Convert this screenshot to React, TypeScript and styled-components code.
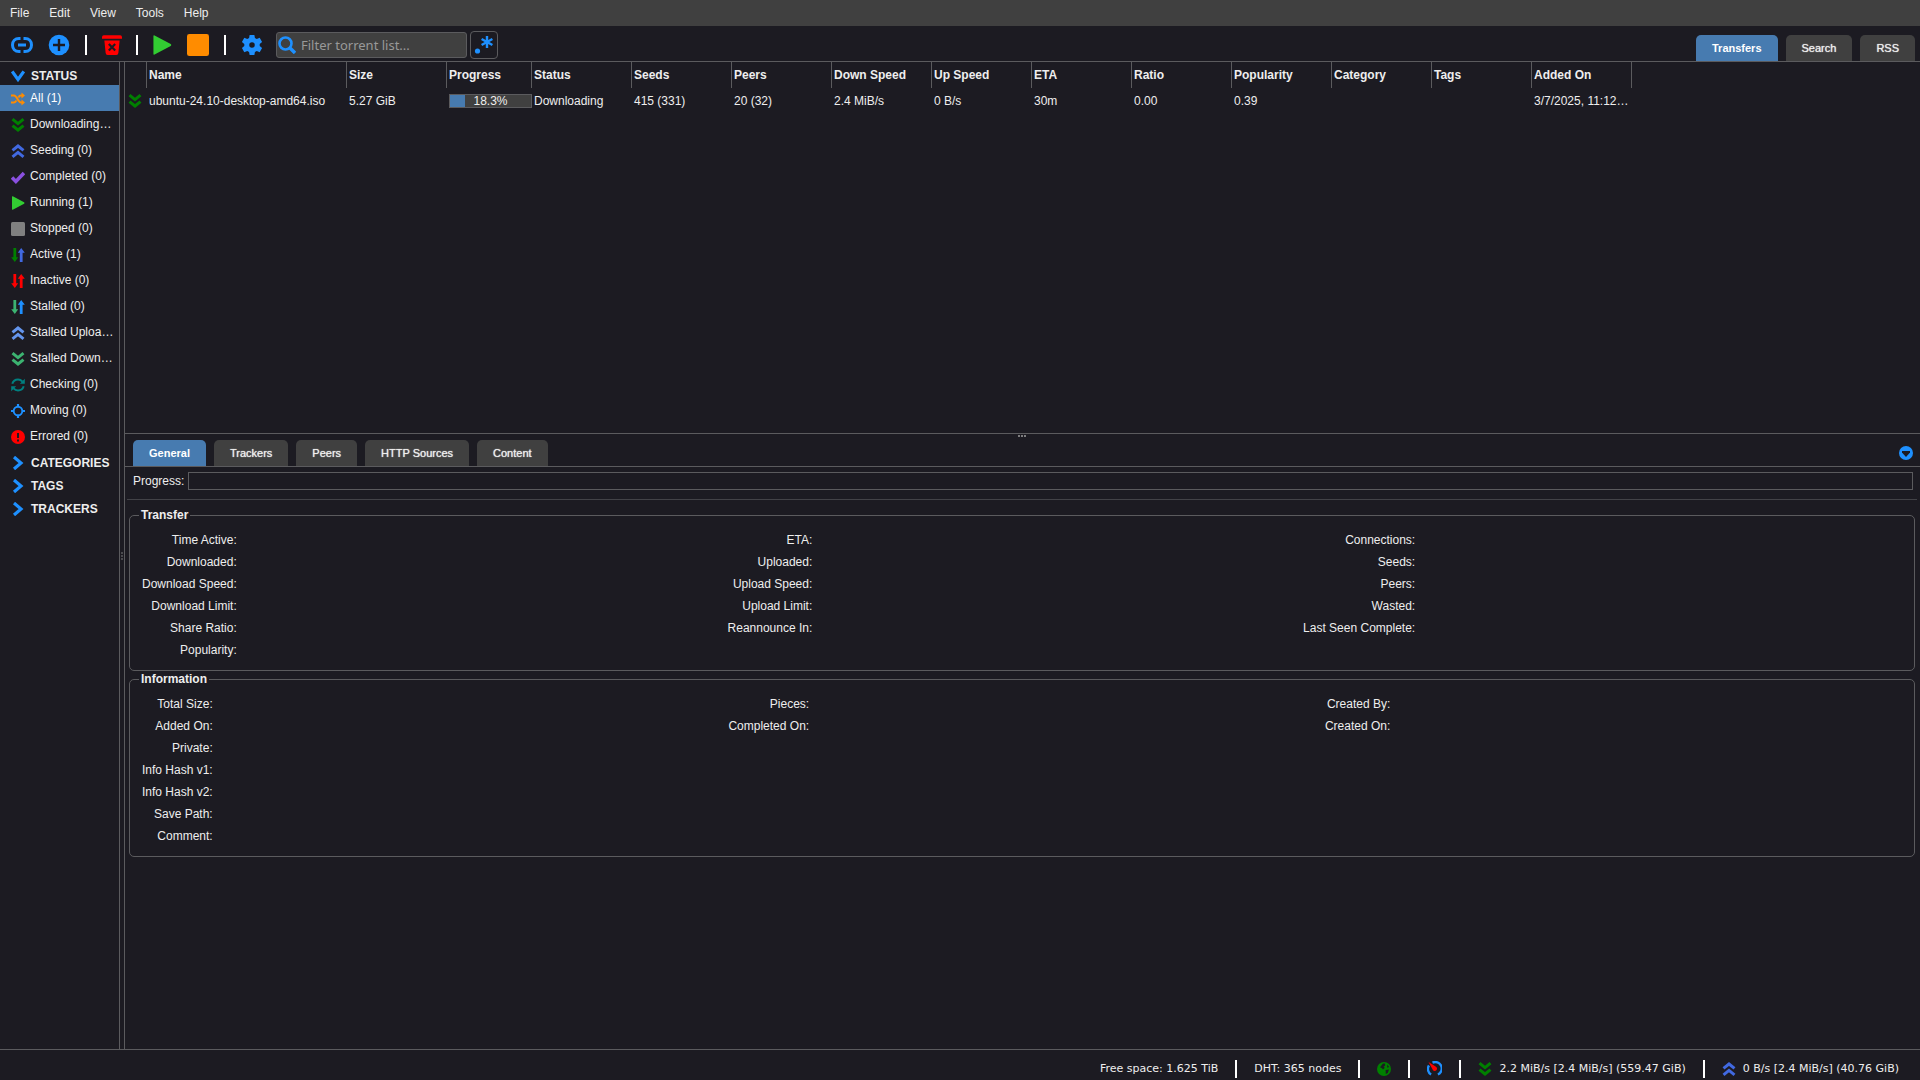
import React, { useState } from "react";
import styled, { createGlobalStyle } from "styled-components";

const c = {
  bg: "#1c1b22",
  raised: "#404040",
  line: "#5b5b5e",
  text: "#eeeeee",
  accent: "#477bb0",
  blue: "#1e90ff",
  green: "#008000",
  royal: "#4169e1",
};

const Global = createGlobalStyle`
  *, *::before, *::after { box-sizing: border-box; }
  body {
    margin: 0;
    background: ${c.bg};
    color: ${c.text};
    font: 12px/16px "Liberation Sans", Arial, sans-serif;
  }
  button, input { font: inherit; color: inherit; }
  button { background: none; border: 0; padding: 0; cursor: pointer; }
  a { color: inherit; text-decoration: none; }
  ul { list-style: none; margin: 0; padding: 0; }
  svg { display: block; flex: none; }
`;

const Page = styled.div`
  display: flex;
  flex-direction: column;
  height: 100vh;
  overflow: hidden;
`;

const MenuBar = styled.nav`
  display: flex;
  height: 26px;
  background: ${c.raised};
`;

const MenuButton = styled.button`
  padding: 0 10px;
`;

const Toolbar = styled.header`
  display: flex;
  align-items: flex-end;
  justify-content: space-between;
  height: 36px;
  padding: 0 5px 0 11px;
  border-bottom: 1px solid ${c.line};
`;

const Tools = styled.div`
  display: flex;
  align-items: center;
  align-self: stretch;
  padding-top: 2px;
`;

const ToolGroup = styled.div`
  display: flex;
  align-items: center;
  gap: 15px;
`;

const Divider = styled.span<{ $gap: number }>`
  width: 2px;
  height: 20px;
  margin: 0 ${(p) => p.$gap}px;
  background: #fff;
`;

const SearchBox = styled.label`
  display: flex;
  align-items: center;
  width: 191px;
  height: 26px;
  margin-left: 13px;
  padding-left: 1px;
  border: 1px solid ${c.line};
  border-radius: 3px;
  background: ${c.raised};
`;

const SearchInput = styled.input`
  flex: 1;
  min-width: 0;
  height: 24px;
  padding: 0 5px;
  border: 0;
  outline: 0;
  background: none;
  font: 13px "Noto Sans", sans-serif;
  &::placeholder { color: #999; opacity: 1; }
`;

const RegexButton = styled.button`
  display: grid;
  place-items: center;
  width: 28px;
  height: 28px;
  margin-left: 3px;
  border: 1px solid ${c.line};
  border-radius: 4px;
`;

const TabList = styled.div`
  display: flex;
  gap: 8px;
`;

const Tab = styled.button<{ $active?: boolean }>`
  height: 26px;
  padding: 0 16px;
  border-radius: 5px 5px 0 0;
  background: ${(p) => (p.$active ? c.accent : c.raised)};
  color: ${(p) => (p.$active ? "#fff" : c.text)};
  font-size: 11px;
  font-weight: ${(p) => (p.$active ? "bold" : "normal")};
  text-shadow: ${(p) => (p.$active ? "none" : "0 0 1px currentColor")};
`;

const Body = styled.div`
  display: flex;
  flex: 1;
  min-height: 0;
`;

const Sidebar = styled.aside`
  width: 120px;
  border-right: 1px solid ${c.line};
`;

const SectionToggle = styled.button`
  display: flex;
  align-items: center;
  gap: 6px;
  width: 100%;
  height: 23px;
  padding: 4px 11px 0;
  font-weight: bold;
`;

const FilterLink = styled.a<{ $selected?: boolean }>`
  display: flex;
  align-items: center;
  gap: 5px;
  height: 26px;
  padding: 0 5px 0 11px;
  background: ${(p) => (p.$selected ? c.accent : "none")};
  color: ${(p) => (p.$selected ? "#fff" : c.text)};
  svg { margin-top: 2px; }
`;

const FilterName = styled.span`
  overflow: hidden;
  text-overflow: ellipsis;
  white-space: nowrap;
`;

const SideHandle = styled.div`
  display: grid;
  place-items: center;
  width: 4px;
`;

const Content = styled.main`
  display: flex;
  flex: 1;
  flex-direction: column;
  min-width: 0;
  border-left: 1px solid ${c.line};
`;

const Transfers = styled.section`
  flex: 371 1 0;
  min-height: 0;
  overflow: hidden;
`;

const Torrents = styled.table`
  border-collapse: separate;
  border-spacing: 0;
  table-layout: fixed;
  width: 1507px;
  th, td {
    height: 26px;
    overflow: hidden;
    text-align: left;
    text-overflow: ellipsis;
    white-space: nowrap;
  }
  th { padding: 0 0 0 2px; border-right: 1px solid ${c.line}; }
  td { padding: 0 0 0 2px; }
  td:first-child { padding-left: 3px; }
  td:last-child { padding-right: 3px; }
`;

const Meter = styled.div`
  position: relative;
  height: 14px;
  border: 1px solid ${c.line};
  background: ${c.raised};
  line-height: 12px;
  text-align: center;
`;

const MeterFill = styled.div`
  height: 12px;
  background: ${c.accent};
`;

const MeterText = styled.span`
  position: absolute;
  inset: 0;
`;

const RowHandle = styled.div`
  display: flex;
  justify-content: center;
  height: 7px;
  padding: 1px 2px 0 0;
  border-top: 1px solid ${c.line};
`;

const Details = styled.section`
  flex: 609 1 0;
  min-height: 0;
`;

const DetailTabs = styled.div`
  display: flex;
  align-items: center;
  justify-content: space-between;
  padding: 0 7px 0 8px;
  border-bottom: 1px solid ${c.line};
`;

const ProgressRow = styled.div`
  display: flex;
  align-items: center;
  gap: 4px;
  padding: 5px 7px 9px 8px;
`;

const PiecesBar = styled.div`
  flex: 1;
  height: 18px;
  border: 1px solid ${c.line};
`;

const Rule = styled.hr`
  height: 1px;
  margin: 0 3px 7px 2px;
  border: 0;
  background: #424247;
`;

const Group = styled.fieldset`
  margin: 0 5px 0 4px;
  padding: 6px 8px 9px 12px;
  border: 1px solid ${c.line};
  border-radius: 5px;
`;

const Legend = styled.legend`
  margin-left: -3px;
  padding: 0 2px;
  font-weight: bold;
`;

const Fields = styled.dl`
  display: grid;
  grid-template-columns: repeat(3, max-content 1fr);
  margin: 0;
  line-height: 22px;
`;

const Label = styled.dt<{ $first?: boolean }>`
  text-align: right;
  ${(p) => p.$first && "grid-column: 1;"}
`;

const Value = styled.dd`
  margin: 0;
`;

const StatusBar = styled.footer`
  display: flex;
  align-items: center;
  justify-content: flex-end;
  height: 31px;
  padding: 7px 21px 0 0;
  border-top: 1px solid ${c.line};
  font: 11px/16px "DejaVu Sans", Verdana, sans-serif;
`;

const StatusItem = styled.span`
  display: flex;
  align-items: center;
  gap: 7px;
  & + & {
    margin-left: 17px;
  }
  & + &::before {
    content: "";
    width: 2px;
    height: 18px;
    margin-right: 10px;
    background: #fff;
  }
`;

type Draw = { size?: number; color?: string };
const Svg = ({ size = 14, box = 14, children }: { size?: number; box?: number; children: React.ReactNode }) => (
  <svg width={size} height={size} viewBox={`0 0 ${box} ${box}`} fill="none" aria-hidden="true">
    {children}
  </svg>
);

const DoubleDown = ({ color = c.green }: Draw) => (
  <Svg><path d="M1.500 1.200 7 5.600l5.500-4.400M1.500 7.600 7 12l5.500-4.400" stroke={color} strokeWidth="3" /></Svg>
);
const DoubleUp = ({ color = c.royal }: Draw) => (
  <Svg><path d="M1.500 6.400 7 2l5.500 4.400M1.500 12.800 7 8.400l5.500 4.400" stroke={color} strokeWidth="3" /></Svg>
);
const Shuffle = () => (
  <Svg>
    <path d="M0 3.500h3c3 0 4 7 7 7h2M0 10.500h3c1 0 1.800-.8 2.400-1.900M7.400 5.400C8 4.300 9 3.500 10 3.500h2" stroke="#ff8c00" strokeWidth="2" />
    <path d="M10.500.6 14 3.500l-3.500 2.900zM10.500 7.600l3.500 2.900-3.500 2.900z" fill="#ff8c00" />
  </Svg>
);
const Check = () => (
  <Svg><path d="m1 7.400 3.900 4L13 3" stroke="#8a50e0" strokeWidth="3.600" /></Svg>
);
const Play = ({ size = 14 }: Draw) => (
  <Svg size={size}><path d="M1 .7Q1 0 1.800.3l11.300 6q.9.700 0 1.400L1.800 13.700q-.8.300-.8-.4z" fill="#32cd32" /></Svg>
);
const Square = ({ size = 14, color }: Draw) => (
  <Svg size={size}><rect width="14" height="14" rx="1.500" fill={color} /></Svg>
);
const Arrows = ({ down, up }: { down: string; up: string }) => (
  <Svg>
    <path d="M2.400 0h2.800v9.200h2L3.800 14 .2 9.200h2.200z" fill={down} />
    <path d="M8.800 14h2.800V4.800h2.200L10.200 0 6.800 4.800h2z" fill={up} />
  </Svg>
);
const Refresh = () => (
  <Svg>
    <path d="M1.300 5.800C2.200 3 4.400 1.600 7 1.600c1.900 0 3.300.7 4.500 2M12.700 8.200c-.9 2.800-3.100 4.200-5.700 4.200-1.900 0-3.300-.7-4.500-2" stroke="#008080" strokeWidth="2" />
    <path d="M13.800.8v5H8.900zM.2 13.200v-5h4.900z" fill="#008080" />
  </Svg>
);
const Target = () => (
  <Svg>
    <circle cx="7" cy="7" r="4.300" stroke={c.blue} strokeWidth="1.900" />
    <path d="M7 0v3M7 11v3M0 7h3M11 7h3" stroke={c.blue} strokeWidth="2.200" />
  </Svg>
);
const Alert = () => (
  <Svg>
    <circle cx="7" cy="7" r="7" fill="red" />
    <path d="M7 3v5M7 9.400v2" stroke={c.bg} strokeWidth="2" />
  </Svg>
);
const Chevron = ({ open }: { open?: boolean }) => (
  <Svg><path d={open ? "m1.200 2.500 5.800 8 5.800-8" : "m3 1 7 6-7 6"} stroke={c.blue} strokeWidth="3.200" /></Svg>
);
const LinkIcon = () => (
  <Svg size={22} box={22}>
    <path d="M9.500 4.500H8C4 4.500 1.500 7 1.500 11S4 17.500 8 17.500h1.500M12.500 4.500H14c4 0 6.500 2.500 6.500 6.500s-2.500 6.500-6.500 6.500h-1.500" stroke={c.blue} strokeWidth="3" />
    <path d="M7 11h8" stroke={c.blue} strokeWidth="3" />
  </Svg>
);
const PlusIcon = () => (
  <Svg size={22} box={22}>
    <circle cx="11" cy="11" r="10.300" fill={c.blue} />
    <path d="M11 5v12M5 11h12" stroke={c.bg} strokeWidth="2.400" />
  </Svg>
);
const TrashIcon = () => (
  <Svg size={20} box={22}>
    <path d="M0 2.500Q0 .2 2 .2h18q2 0 2 2.300V4H0zM2.600 6h16.800l-1.400 13.700q-.2 2.200-2.200 2.200H6.200q-2 0-2.200-2.200z" fill="red" />
    <path d="m7.500 10 7 7M14.500 10l-7 7" stroke={c.bg} strokeWidth="2.400" />
  </Svg>
);
const GearIcon = () => (
  <Svg size={22} box={24}>
    <path fill={c.blue} fillRule="evenodd" d="M9.400 1h5.200l.6 3.300 2 1.100 3.200-1.200 2.600 4.500-2.600 2.200v2.200l2.600 2.200-2.600 4.500-3.200-1.200-2 1.100-.6 3.300H9.400l-.6-3.300-2-1.100-3.200 1.200L1 15.300l2.600-2.200v-2.200L1 8.700l2.600-4.500 3.200 1.200 2-1.100zM12 9a3 3 0 1 0 0 6 3 3 0 0 0 0-6z" />
  </Svg>
);
const SearchIcon = () => (
  <Svg size={18} box={18}>
    <circle cx="7.500" cy="7.500" r="6" stroke={c.blue} strokeWidth="2.600" />
    <path d="m12 12 5 5" stroke={c.blue} strokeWidth="3.400" />
  </Svg>
);
const RegexIcon = () => (
  <Svg size={20} box={20}>
    <circle cx="3.500" cy="16" r="2.600" fill={c.blue} />
    <path d="M13 1v12M7.600 4l10.800 6M18.400 4 7.600 10" stroke={c.blue} strokeWidth="2.400" />
  </Svg>
);
const Globe = () => (
  <Svg>
    <circle cx="7" cy="7" r="7" fill={c.green} />
    <path d="M6 1.600 8 1.400l.2 2L6.600 4.800l1.200 1L6 7.400 5 6.200 3 5.200zM10.200 2.400l2 2.600-2 .8zM8.600 8l3.400-.4-1.200 3.400-2 1z" fill={c.bg} />
  </Svg>
);
const Gauge = () => (
  <Svg size={15} box={15}>
    <path d="M5.500 1.600a6.300 6.300 0 0 1 5.400 11.900M2 4.500a6.300 6.300 0 0 0 2.100 9" stroke={c.blue} strokeWidth="2.400" />
    <path d="M1.500 1 8.600 5.600a2.300 2.300 0 1 1-3 3z" fill="red" />
  </Svg>
);
const Collapse = () => (
  <Svg>
    <circle cx="7" cy="7" r="7" fill={c.blue} />
    <path d="M3 5h8v1.500L7 11 3 6.500z" fill={c.bg} />
  </Svg>
);
const RowDots = () => (
  <svg width="8" height="2" fill="#7d7d7f" aria-hidden="true">
    <path d="M0 0h2v2H0zM3 0h2v2H3zM6 0h2v2H6z" />
  </svg>
);
const SideDots = () => (
  <svg width="2" height="8" fill="#4a4a4e" aria-hidden="true">
    <path d="M0 0h2v2H0zM0 3h2v2H0zM0 6h2v2H0z" />
  </svg>
);

const filters: [string, React.ReactNode][] = [
  ["All (1)", <Shuffle />],
  ["Downloading (1)", <DoubleDown />],
  ["Seeding (0)", <DoubleUp />],
  ["Completed (0)", <Check />],
  ["Running (1)", <Play />],
  ["Stopped (0)", <Square color="#808080" />],
  ["Active (1)", <Arrows down={c.green} up={c.royal} />],
  ["Inactive (0)", <Arrows down="red" up="red" />],
  ["Stalled (0)", <Arrows down="#3cb371" up={c.blue} />],
  ["Stalled Uploading (0)", <DoubleUp color="#6495ed" />],
  ["Stalled Downloading (0)", <DoubleDown color="#3cb371" />],
  ["Checking (0)", <Refresh />],
  ["Moving (0)", <Target />],
  ["Errored (0)", <Alert />],
];

const columns: [string, number][] = [
  ["", 22], ["Name", 200], ["Size", 100], ["Progress", 85], ["Status", 100], ["Seeds", 100], ["Peers", 100],
  ["Down Speed", 100], ["Up Speed", 100], ["ETA", 100], ["Ratio", 100], ["Popularity", 100], ["Category", 100],
  ["Tags", 100], ["Added On", 100],
];

const torrent = {
  name: "ubuntu-24.10-desktop-amd64.iso",
  size: "5.27 GiB",
  progress: 18.3,
  rest: ["Downloading", "415 (331)", "20 (32)", "2.4 MiB/s", "0 B/s", "30m", "0.00", "0.39", "", "", "3/7/2025, 11:12:04 AM"],
};

const transferFields = [
  ["Time Active:", "ETA:", "Connections:"],
  ["Downloaded:", "Uploaded:", "Seeds:"],
  ["Download Speed:", "Upload Speed:", "Peers:"],
  ["Download Limit:", "Upload Limit:", "Wasted:"],
  ["Share Ratio:", "Reannounce In:", "Last Seen Complete:"],
  ["Popularity:"],
];

const infoFields = [
  ["Total Size:", "Pieces:", "Created By:"],
  ["Added On:", "Completed On:", "Created On:"],
  ["Private:"],
  ["Info Hash v1:"],
  ["Info Hash v2:"],
  ["Save Path:"],
  ["Comment:"],
];

const FieldGroup = ({ title, rows }: { title: string; rows: string[][] }) => (
  <Group>
    <Legend>{title}</Legend>
    <Fields>
      {rows.map((row) =>
        row.map((label, i) => (
          <React.Fragment key={label}>
            <Label $first={i === 0}>{label}</Label>
            <Value />
          </React.Fragment>
        ))
      )}
    </Fields>
  </Group>
);

const Tabs = ({ names }: { names: string[] }) => {
  const [active, setActive] = useState(names[0]);
  return (
    <TabList role="tablist">
      {names.map((name) => (
        <Tab key={name} role="tab" aria-selected={name === active} $active={name === active} onClick={() => setActive(name)}>
          {name}
        </Tab>
      ))}
    </TabList>
  );
};

export default function App() {
  const [selected, setSelected] = useState(0);
  return (
    <Page>
      <Global />
      <MenuBar>
        {["File", "Edit", "View", "Tools", "Help"].map((m) => (
          <MenuButton key={m}>{m}</MenuButton>
        ))}
      </MenuBar>
      <Toolbar>
        <Tools>
          <ToolGroup>
            <button aria-label="Add torrent link"><LinkIcon /></button>
            <button aria-label="Add torrent file"><PlusIcon /></button>
          </ToolGroup>
          <Divider $gap={15} />
          <button aria-label="Remove"><TrashIcon /></button>
          <Divider $gap={14} />
          <ToolGroup>
            <button aria-label="Start"><Play size={20} /></button>
            <button aria-label="Stop"><Square size={22} color="#ff8c00" /></button>
          </ToolGroup>
          <Divider $gap={15} />
          <button aria-label="Options"><GearIcon /></button>
          <SearchBox>
            <SearchIcon />
            <SearchInput type="text" placeholder="Filter torrent list..." aria-label="Filter torrent list" />
          </SearchBox>
          <RegexButton aria-label="Use regular expressions"><RegexIcon /></RegexButton>
        </Tools>
        <Tabs names={["Transfers", "Search", "RSS"]} />
      </Toolbar>
      <Body>
        <Sidebar>
          <SectionToggle><Chevron open />STATUS</SectionToggle>
          <ul>
            {filters.map(([name, icon], i) => (
              <li key={name}>
                <FilterLink href="#" $selected={i === selected} onClick={() => setSelected(i)}>
                  {icon}
                  <FilterName>{name}</FilterName>
                </FilterLink>
              </li>
            ))}
          </ul>
          <SectionToggle><Chevron />CATEGORIES</SectionToggle>
          <SectionToggle><Chevron />TAGS</SectionToggle>
          <SectionToggle><Chevron />TRACKERS</SectionToggle>
        </Sidebar>
        <SideHandle><SideDots /></SideHandle>
        <Content>
          <Transfers>
            <Torrents>
              <colgroup>
                {columns.map(([name, width]) => <col key={name} style={{ width }} />)}
              </colgroup>
              <thead>
                <tr>{columns.map(([name]) => <th key={name} scope="col">{name}</th>)}</tr>
              </thead>
              <tbody>
                <tr>
                  <td><DoubleDown /></td>
                  <td>{torrent.name}</td>
                  <td>{torrent.size}</td>
                  <td>
                    <Meter>
                      <MeterFill style={{ width: `${torrent.progress}%` }} />
                      <MeterText>{torrent.progress}%</MeterText>
                    </Meter>
                  </td>
                  {torrent.rest.map((value, i) => <td key={i}>{value}</td>)}
                </tr>
              </tbody>
            </Torrents>
          </Transfers>
          <RowHandle><RowDots /></RowHandle>
          <Details>
            <DetailTabs>
              <Tabs names={["General", "Trackers", "Peers", "HTTP Sources", "Content"]} />
              <button aria-label="Collapse panel"><Collapse /></button>
            </DetailTabs>
            <ProgressRow>
              Progress:
              <PiecesBar role="progressbar" aria-label="Progress" />
            </ProgressRow>
            <Rule />
            <FieldGroup title="Transfer" rows={transferFields} />
            <FieldGroup title="Information" rows={infoFields} />
          </Details>
        </Content>
      </Body>
      <StatusBar>
        <StatusItem>Free space: 1.625 TiB</StatusItem>
        <StatusItem>DHT: 365 nodes</StatusItem>
        <StatusItem><Globe /></StatusItem>
        <StatusItem><Gauge /></StatusItem>
        <StatusItem><DoubleDown />2.2 MiB/s [2.4 MiB/s] (559.47 GiB)</StatusItem>
        <StatusItem><DoubleUp />0 B/s [2.4 MiB/s] (40.76 GiB)</StatusItem>
      </StatusBar>
    </Page>
  );
}
